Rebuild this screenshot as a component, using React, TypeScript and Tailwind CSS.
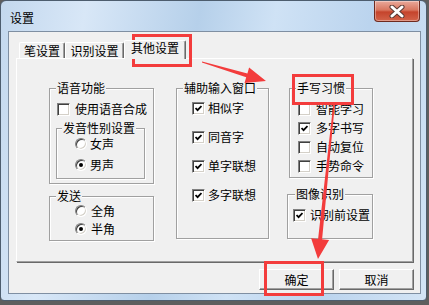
import type { ReactNode } from 'react';

const CheckBox = ({ checked }: { checked?: boolean }) => (
  <span className="flex h-[13px] w-[13px] shrink-0 items-center justify-center border border-t-[#808080] border-l-[#808080] border-r-white border-b-white bg-white shadow-[inset_1px_1px_0_#404040,inset_-1px_-1px_0_#d4d0c8]">
    {checked && (
      <svg width="7" height="7" viewBox="0 0 7 7">
        <polyline points="0.5,3 2.6,5.2 6.5,1" fill="none" stroke="#000" strokeWidth="1.8" />
      </svg>
    )}
  </span>
);

const Radio = ({ checked }: { checked?: boolean }) => (
  <span className="flex h-[12px] w-[12px] shrink-0 items-center justify-center rounded-full border border-t-[#808080] border-l-[#808080] border-r-white border-b-white bg-white shadow-[inset_1px_1px_0_#404040,inset_-1px_-1px_0_#d4d0c8]">
    {checked && <span className="h-[4px] w-[4px] rounded-full bg-black" />}
  </span>
);

const Row = ({ children, label, gap }: { children: ReactNode; label: string; gap: string }) => (
  <div className={`flex h-[14px] items-center leading-[14px] ${gap}`}>
    {children}
    <span className="whitespace-nowrap">{label}</span>
  </div>
);

const Tab = ({ label, w, active }: { label: string; w: string; active?: boolean }) =>
  active ? (
    <div className={`relative z-10 -mb-px flex h-[19px] ${w} justify-center rounded-t-[2px] border-t border-l border-r border-t-white border-l-white border-r-[#696969] bg-[#f0f0f0] leading-[14px] shadow-[inset_-1px_0_0_#a0a0a0]`}>
      {label}
    </div>
  ) : (
    <div className={`flex h-[16px] ${w} justify-center rounded-t-[2px] border-t border-l border-r border-t-white border-l-white border-r-[#696969] pt-px leading-[14px] shadow-[inset_-1px_0_0_#a0a0a0]`}>
      {label}
    </div>
  );

const Button = ({ label }: { label: string }) => (
  <button className="h-[21px] w-[75px] border border-t-white border-l-white border-r-[#696969] border-b-[#696969] bg-[#f0f0f0] leading-[14px] shadow-[inset_-1px_-1px_0_#a0a0a0]">
    {label}
  </button>
);

// etched group box line: gray border, white highlight
const groupCls = 'border border-[#a0a0a0] shadow-[1px_1px_0_#fff,inset_1px_1px_0_#fff]';
const legendCls = 'bg-[#f0f0f0] px-px leading-[16px]';

export default function App() {
  return (
    <div className="relative h-[305px] w-[429px] overflow-hidden bg-[#5e5e5e] font-['Noto_Sans_CJK_SC',sans-serif] text-[12px] text-black">
      <div className="h-[301px] w-[427px] rounded-t-[6px] rounded-b-[4px] border border-[#4d5d6e] bg-[linear-gradient(100deg,#c3d8ee_0%,#d8e7f7_18%,#b6d0ea_42%,#cfe2f5_58%,#bbd4ee_78%,#d3e4f5_100%)]">
        {/* title bar */}
        <div className="flex h-[30px] items-start">
          <span className="pl-[9px] pt-[9px] leading-[16px]">设置</span>
          <div className="ml-auto mr-[6px] flex h-[21px] w-[46px] items-center justify-center rounded-b-[4px] border border-t-0 border-[#6e2a1f] bg-[linear-gradient(#e9a99b_0%,#d8765f_45%,#c5442c_55%,#d2634a_100%)] shadow-[inset_0_0_0_1px_rgba(255,255,255,0.35)]">
            <svg width="16" height="13" viewBox="0 0 16 13">
              <path d="M3 2 L13 11 M13 2 L3 11" stroke="#5a3a34" strokeWidth="5" strokeLinecap="round" />
              <path d="M3 2 L13 11 M13 2 L3 11" stroke="#fff" strokeWidth="3" strokeLinecap="round" />
            </svg>
          </div>
        </div>

        {/* client area */}
        <div className="ml-[7px] h-[263px] w-[413px] border border-[#7f8fa2] bg-[#f0f0f0] pt-[8px]">
          <div className="ml-[7px]">
            <div className="flex h-[18px] items-end pl-[3px]">
              <Tab label="笔设置" w="w-[46px]" />
              <Tab label="识别设置" w="w-[59px]" />
              <Tab label="其他设置" w="w-[62px]" active />
            </div>

            <div className="flex h-[204px] w-[397px] border border-t-white border-l-white border-r-[#a0a0a0] border-b-[#a0a0a0] shadow-[1px_1px_0_#696969]">
              {/* column 1 */}
              <div className="ml-[32px] mt-[21px] flex flex-col">
                <fieldset className={`w-[105px] pb-[4px] ${groupCls}`}>
                  <legend className={`ml-[6px] ${legendCls}`}>语音功能</legend>
                  <div className="ml-[7px] mt-[6px]">
                    <Row label="使用语音合成" gap="gap-[5px]">
                      <CheckBox />
                    </Row>
                  </div>
                  <fieldset className={`ml-[6px] mt-[4px] w-[89px] pb-[6px] ${groupCls}`}>
                    <legend className={`ml-[5px] ${legendCls}`}>发音性别设置</legend>
                    <div className="ml-[18px] mt-px flex flex-col gap-[7px]">
                      <Row label="女声" gap="gap-[3px]">
                        <Radio />
                      </Row>
                      <Row label="男声" gap="gap-[3px]">
                        <Radio checked />
                      </Row>
                    </div>
                  </fieldset>
                </fieldset>

                <fieldset className={`mt-[4px] w-[105px] pb-[4px] ${groupCls}`}>
                  <legend className={`ml-[6px] ${legendCls}`}>发送</legend>
                  <div className="ml-[25px] flex flex-col gap-[4px]">
                    <Row label="全角" gap="gap-[4px]">
                      <Radio />
                    </Row>
                    <Row label="半角" gap="gap-[4px]">
                      <Radio checked />
                    </Row>
                  </div>
                </fieldset>
              </div>

              {/* column 2 */}
              <div className="ml-[22px] mt-[21px]">
                <fieldset className={`h-[159px] w-[93px] ${groupCls}`}>
                  <legend className={`ml-[6px] ${legendCls}`}>辅助输入窗口</legend>
                  <div className="ml-[15px] mt-[5px] flex flex-col gap-[15px]">
                    {['相似字', '同音字', '单字联想', '多字联想'].map((t) => (
                      <Row key={t} label={t} gap="gap-[3px]">
                        <CheckBox checked />
                      </Row>
                    ))}
                  </div>
                </fieldset>
              </div>

              {/* column 3 */}
              <div className="ml-[18px] mt-[21px] flex flex-col">
                <fieldset className={`ml-[2px] w-[84px] pb-[4px] ${groupCls}`}>
                  <legend className={`ml-[6px] ${legendCls}`}>手写习惯</legend>
                  <div className="ml-[8px] mt-[6px] flex flex-col gap-[5px]">
                    <Row label="智能学习" gap="gap-[5px]">
                      <CheckBox />
                    </Row>
                    <Row label="多字书写" gap="gap-[5px]">
                      <CheckBox checked />
                    </Row>
                    <Row label="自动复位" gap="gap-[5px]">
                      <CheckBox />
                    </Row>
                    <Row label="手势命令" gap="gap-[5px]">
                      <CheckBox />
                    </Row>
                  </div>
                </fieldset>

                <fieldset className={`mt-[8px] h-[53px] w-[86px] ${groupCls}`}>
                  <legend className={`ml-[7px] ${legendCls}`}>图像识别</legend>
                  <div className="ml-[5px] mt-[6px]">
                    <Row label="识别前设置" gap="gap-[4px]">
                      <CheckBox checked />
                    </Row>
                  </div>
                </fieldset>
              </div>
            </div>

            <div className="mt-[7px] flex w-[398px] justify-end gap-[5px]">
              <Button label="确定" />
              <Button label="取消" />
            </div>
          </div>
        </div>
      </div>

      {/* red annotations */}
      <div className="pointer-events-none absolute left-[132px] top-[34px] h-[33px] w-[60px] border-[3px] border-[#f33c3c]" />
      <div className="pointer-events-none absolute left-[292px] top-[74px] h-[31px] w-[62px] border-[3px] border-[#f33c3c]" />
      <div className="pointer-events-none absolute left-[264px] top-[261px] h-[35px] w-[60px] border-[3px] border-[#f33c3c]" />
      <svg className="pointer-events-none absolute left-0 top-0" width="429" height="305" viewBox="0 0 429 305">
        <polygon
          points="202.1,61.5 247.4,73.4 249.1,67.6 266,81 244.5,83 246.2,77.2 201.9,62.5"
          fill="#f33c3c"
        />
        <polygon
          points="333.2,104.9 318.1,238.9 311.1,238.2 318,259 329.1,240 322.1,239.3 334.8,105.1"
          fill="#f33c3c"
        />
      </svg>
    </div>
  );
}
